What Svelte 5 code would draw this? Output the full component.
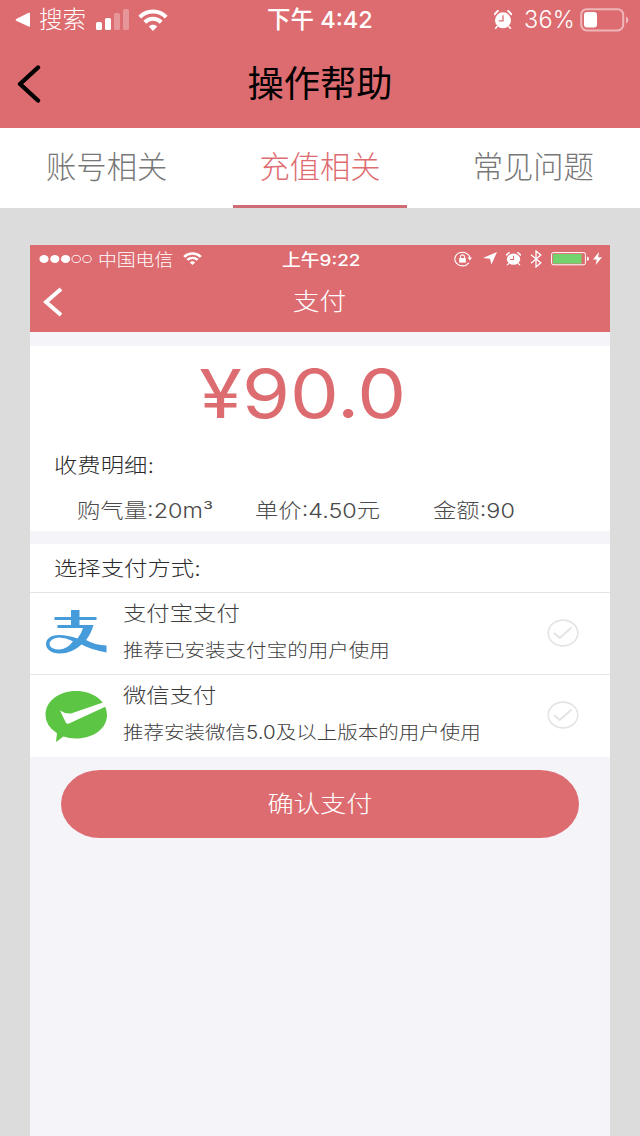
<script>
  const tabs = ['账号相关', '充值相关', '常见问题'];
  let active = $state(1);

  const methods = [
    { id: 'alipay', name: '支付宝支付', hint: '推荐已安装支付宝的用户使用' },
    { id: 'wechat', name: '微信支付', hint: '推荐安装微信5.0及以上版本的用户使用' }
  ];
</script>

{#snippet wifi()}
  <svg class="wifi" viewBox="0 0 30 22" preserveAspectRatio="none">
    <g fill="none" stroke="#fff" stroke-width="4">
      <path d="M1.8 8.2C9 .6 21 .6 28.2 8.2" />
      <path d="M6.8 13.3C11.5 8.7 18.5 8.7 23.2 13.3" />
    </g>
    <path d="M10.8 17.6C13 15.2 17 15.2 19.2 17.6L15 22Z" fill="#fff" />
  </svg>
{/snippet}

{#snippet alarm()}
  <svg class="alarm" viewBox="0 0 18 20" preserveAspectRatio="none">
    <circle cx="9" cy="10.3" r="8" fill="#fff" />
    <path d="M.6 4.2L3.8 .9M17.4 4.2L14.2 .9" stroke="#fff" stroke-width="2" stroke-linecap="round" />
    <path d="M3.4 16.3L1.2 18.8M14.6 16.3L16.8 18.8" stroke="#fff" stroke-width="1.6" />
    <path d="M9 5.2V10.8H4.8" fill="none" stroke="#dd6c71" stroke-width="1.3" />
  </svg>
{/snippet}

<div class="screen">
  <header>
    <div class="status">
      <svg class="back-app" viewBox="0 0 16 16"><path d="M1.2 7L13.6 .8Q15 .3 15 1.6V13.8Q15 15 13.6 14.6L1.2 8.8Q0 8 1.2 7Z" fill="#fff" /></svg>
      <span class="search">搜索</span>
      <svg class="signal" viewBox="0 0 33 22">
        <g fill="#fff">
          <rect x="0" y="13" width="6" height="8" rx="1.5" />
          <rect x="9" y="9" width="6" height="12" rx="1.5" />
          <rect x="18" y="4" width="6" height="17" rx="1.5" opacity=".28" />
          <rect x="27" y="0" width="6" height="21" rx="1.5" opacity=".28" />
        </g>
      </svg>
      {@render wifi()}
      <span class="clock">下午 4:42</span>
      <span class="right">
        {@render alarm()}
        <span class="percent">36%</span>
        <svg class="battery" viewBox="0 0 49 24">
          <rect x="1.2" y="1.2" width="42" height="21.2" rx="5.5" fill="none" stroke="#fff" stroke-opacity=".5" stroke-width="2" />
          <rect x="4" y="4" width="13" height="15.6" rx="3" fill="#fff" />
          <path d="M46 8.6Q48.4 9.6 48.4 12T46 15.4Z" fill="#fff" fill-opacity=".5" />
        </svg>
      </span>
    </div>
    <div class="nav">
      <svg class="back" viewBox="0 0 24 38"><path d="M21 2.5L3 19L21 35.5" fill="none" stroke="#000" stroke-width="4.4" stroke-linecap="round" stroke-linejoin="round" /></svg>
      <h1>操作帮助</h1>
    </div>
  </header>

  <nav class="tabs">
    {#each tabs as tab, i}
      <button class:active={i === active} onclick={() => (active = i)}>{tab}</button>
    {/each}
  </nav>

  <main>
    <div class="phone">
      <div class="top">
        <div class="mini-status">
          <svg class="dots" viewBox="0 0 54 10">
            <g fill="#fff"><ellipse cx="5" cy="5" rx="4.6" ry="4" /><ellipse cx="15.8" cy="5" rx="4.6" ry="4" /><ellipse cx="26.6" cy="5" rx="4.6" ry="4" /></g>
            <g fill="none" stroke="#fff" stroke-width=".9"><ellipse cx="37.2" cy="5" rx="4.2" ry="3.6" /><ellipse cx="48" cy="5" rx="4.2" ry="3.6" /></g>
          </svg>
          <span class="carrier">中国电信</span>
          {@render wifi()}
          <span class="mini-clock">上午9:22</span>
          <span class="mini-icons">
            <svg class="lock" viewBox="0 0 18 16">
              <path d="M14.8 11.8A7.6 6.8 0 1 1 16 7.2" fill="none" stroke="#fff" stroke-width="1.1" />
              <path d="M13.6 6.6H18L15.9 9.4Z" fill="#fff" />
              <rect x="5.2" y="7" width="6.6" height="4.6" fill="#fff" />
              <path d="M6.5 7V5.7Q6.5 3.9 8.5 3.9T10.5 5.7V7" fill="none" stroke="#fff" stroke-width="1.1" />
            </svg>
            <svg class="arrow" viewBox="0 0 14 13"><path d="M14 0L8.4 12.6L7 6.8L0 6Z" fill="#fff" /></svg>
            {@render alarm()}
            <svg class="bluetooth" viewBox="0 0 12 18"><path d="M1 4.8L10.8 12.8L6 17V1L10.8 5L1 13.2" fill="none" stroke="#fff" stroke-width="1.3" /></svg>
            <svg class="mini-battery" viewBox="0 0 38 14">
              <rect x=".6" y=".6" width="33.8" height="12.2" rx="1.6" fill="none" stroke="#fff" />
              <rect x="2" y="2" width="28.6" height="9.6" fill="#72d36c" />
              <path d="M36 4.5Q38 5 38 6.8T36 9Z" fill="#fff" />
            </svg>
            <svg class="bolt" viewBox="0 0 9 13"><path d="M6 0L0 7.4H3.8L2.6 13L9 5.2H5.2Z" fill="#fff" /></svg>
          </span>
        </div>
        <div class="mini-nav">
          <svg class="mini-back" viewBox="0 0 20 30"><path d="M18 2L3 15L18 28" fill="none" stroke="#fff" stroke-width="4" /></svg>
          <h2>支付</h2>
        </div>
      </div>

      <section class="bill">
        <div class="price"><span>¥90.0</span></div>
        <p class="label">收费明细:</p>
        <div class="details">
          <span>购气量:20m³</span>
          <span>单价:4.50元</span>
          <span>金额:90</span>
        </div>
      </section>

      <section class="pay">
        <p class="label">选择支付方式:</p>
        {#each methods as method (method.id)}
          <div class="method">
            {#if method.id === 'alipay'}
              <svg class="logo" viewBox="0 0 64 56">
                <g fill="#469cdb">
                  <path d="M26 2H34.5V9H51.5V12H34.5V17H48.5Q46 26 41 32Q50 37 61.5 37.5V44.5Q47 42 36.5 36.5Q27 45.500 15 45.500C5.500 45.500 1 40.500 1 36C1 31 5.500 27 14 27Q23 27 32.5 30.500Q36.500 25.500 38 20H12.500V17H26V12H9.500V9H26ZM28 33.200Q21 29.600 14 29.600Q4.500 30.500 4.500 36.500Q6 41.500 14 41.500Q22 41.500 28 33.200Z" fill-rule="evenodd" />
                </g>
              </svg>
            {:else}
              <svg class="logo" viewBox="0 0 64 56">
                <path d="M31 1C48 1 62 11 62 25S48 48.500 31 48.500Q24 48.500 18.500 46.500L11 52L12 43.200Q.5 36 .5 25C.5 11 14 1 31 1Z" fill="#5cc544" />
                <path d="M15 20.500Q20 24 26 23.400L58 12.500L63 10V15.500L24 33.500Q21.500 34.500 20.500 32Z" fill="#fff" />
              </svg>
            {/if}
            <div class="words">
              <span class="name">{method.name}</span>
              <span class="hint">{method.hint}</span>
            </div>
            <svg class="check" viewBox="0 0 32 28">
              <g fill="none" stroke="#e4e4e4"><ellipse cx="16" cy="14" rx="14.800" ry="12.900" stroke-width="1.600" /><path d="M7 14L12.800 19L24.500 8.500" stroke-width="2" /></g>
            </svg>
          </div>
        {/each}
      </section>

      <button class="confirm"><span>确认支付</span></button>
    </div>
  </main>
</div>

<style>
  :global(body) { margin: 0; }
  .screen {
    width: 640px;
    height: 1136px;
    display: flex;
    flex-direction: column;
    overflow: hidden;
    background: #dcdcdc;
    font-family: Inter, "Noto Sans CJK SC", sans-serif;
    font-weight: 300;
  }
  svg { display: block; flex: none; }
  span { white-space: nowrap; }
  h1, h2, p { margin: 0; font-weight: inherit; }
  button { border: 0; padding: 0; background: none; font: inherit; }

  header { height: 128px; background: #dd6c71; flex: none; }
  .status {
    position: relative;
    height: 40px;
    display: flex;
    align-items: center;
    padding: 0 11px 0 15px;
    color: #fff;
    font-size: 23.5px;
    line-height: 40px;
  }
  .back-app { width: 16px; height: 16px; }
  .search { margin-left: 8px; }
  .signal { width: 33px; height: 22px; margin-left: 10px; }
  .status > .wifi { width: 30px; height: 22px; margin-left: 9px; }
  .clock { position: absolute; left: 267px; font-weight: 500; }
  .right { display: flex; align-items: center; margin-left: auto; }
  .right .alarm { width: 18px; height: 20px; margin-right: 12px; }
  .percent { letter-spacing: 0.2px; }
  .battery { width: 49px; height: 24px; margin-left: 5px; }
  .nav { position: relative; height: 88px; display: flex; align-items: center; justify-content: center; }
  .back { position: absolute; left: 17px; top: 25px; width: 24px; height: 38px; }
  h1 { font-size: 36.3px; line-height: 88px; font-weight: 400; }

  .tabs { height: 80px; flex: none; display: grid; grid-template-columns: repeat(3, 1fr); background: #fff; border-bottom: 0; }
  .tabs button {
    width: 174px;
    height: 80px;
    box-sizing: border-box;
    justify-self: center;
    font-size: 30.3px;
    line-height: 78px;
    color: #777;
    border-bottom: 3px solid transparent;
  }
  .tabs .active { color: #dd6c71; border-color: #cf6b74; }

  main { flex: 1; padding: 37px 30px 0; }
  .phone { height: 891px; background: #f4f4f9; display: flex; flex-direction: column; }
  .top { height: 87px; flex: none; background: #dd6c71; color: #fff; }
  .mini-status { position: relative; height: 27px; display: flex; align-items: center; padding: 0 8px 0 9px; font-size: 16.5px; }
  .dots { width: 54px; height: 10px; }
  .carrier { margin-left: 5px; transform: scaleX(1.14); transform-origin: left; }
  .mini-status > .wifi { width: 19px; height: 13px; margin-left: 19px; }
  .mini-clock { position: absolute; left: 252px; font-weight: 500; transform: scaleX(1.14); transform-origin: left; }
  .mini-icons { display: flex; align-items: center; margin-left: auto; }
  .lock { width: 18px; height: 16px; }
  .arrow { width: 14px; height: 13px; margin-left: 11px; }
  .mini-icons .alarm { width: 15px; height: 14px; margin-left: 9px; }
  .bluetooth { width: 12px; height: 18px; margin-left: 9px; }
  .mini-battery { width: 38px; height: 14px; margin-left: 9px; }
  .bolt { width: 9px; height: 13px; margin-left: 4px; }
  .mini-nav { position: relative; height: 60px; }
  .mini-back { position: absolute; left: 13px; top: 15px; width: 20px; height: 30px; }
  h2 { font-size: 23.5px; line-height: 60px; text-align: center; transform: scaleX(1.14); margin-right: 1px; }

  .bill { margin-top: 14px; height: 185px; flex: none; background: #fff; display: flex; flex-direction: column; }
  .price { height: 94px; display: flex; justify-content: center; color: #dd6c71; font-size: 68px; line-height: 94px; padding-right: 34px; font-weight: 400; }
  .price span { transform: scaleX(1.14); }
  .label { padding-left: 24px; height: 52px; line-height: 52px; font-size: 20.5px; color: #2b2b2b; transform: scaleX(1.14); transform-origin: 24px 50%; }
  .details { display: grid; grid-template-columns: 178px 178px 1fr; padding-left: 47px; font-size: 20.5px; line-height: 37px; color: #4a4a4a; }
  .details span { transform: scaleX(1.14); transform-origin: left; }

  .pay { margin-top: 13px; flex: none; background: #fff; }
  .pay .label { height: 48px; line-height: 50px; }
  .method { height: 82px; box-sizing: border-box; border-top: 1px solid #e4e4e6; display: flex; padding-left: 15px; color: #3e3e3e; }
  .logo { width: 64px; height: 56px; margin-top: 15px; }
  .words { margin-left: 14px; flex: 1; display: flex; flex-direction: column; }
  .words span { transform: scaleX(1.14); transform-origin: left; }
  .name { font-size: 20.5px; line-height: 42px; }
  .hint { font-size: 18px; line-height: 32px; }
  .check { width: 32px; height: 28px; margin: 26px 31px 0 0; }
  .method:last-child { height: 83px; }

  .confirm { width: 518px; height: 68px; margin: 13px 0 0 31px; border-radius: 39px / 34px; background: #dd6c71; color: #fff; font-size: 23px; line-height: 68px; }
  .confirm span { display: inline-block; transform: scaleX(1.14); }
</style>
